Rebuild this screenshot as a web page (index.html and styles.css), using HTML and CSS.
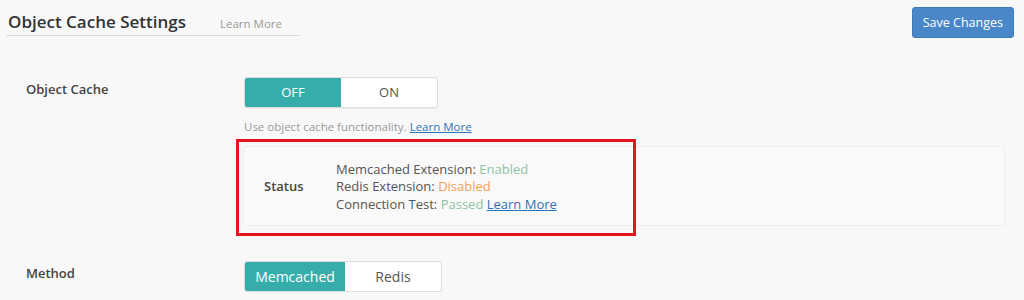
FILE: index.html
```html
<!DOCTYPE html>
<html lang="en">
<head>
	<meta charset="UTF-8">
	<title>Object Cache Settings</title>
<link rel="stylesheet" href="styles.css">
</head>
<body>
	<div class="header">
		<div class="title-wrap">
			<h1>Object Cache Settings</h1>
			<a href="javascript:;" class="title-link">Learn More</a>
		</div>
		<a href="javascript:;" class="btn-save">Save Changes</a>
	</div>

	<div class="settings">
		<div class="row">
			<div class="row-label">Object Cache</div>
			<div class="row-body">
				<div class="toggle">
					<span class="on">OFF</span>
					<span>ON</span>
				</div>
				<p class="help">Use object cache functionality. <a href="javascript:;">Learn More</a></p>
				<div class="status-wrap">
					<div class="status">
						<div class="status-label">Status</div>
						<div class="status-lines">
							<div>Memcached Extension: <span class="ok">Enabled</span></div>
							<div>Redis Extension: <span class="bad">Disabled</span></div>
							<div>Connection Test: <span class="ok">Passed</span> <a href="javascript:;">Learn More</a></div>
						</div>
					</div>
					<div class="mark"></div>
				</div>
			</div>
		</div>

		<div class="row row-method">
			<div class="row-label">Method</div>
			<div class="row-body">
				<div class="toggle toggle-method">
					<span class="on">Memcached</span>
					<span>Redis</span>
				</div>
			</div>
		</div>
	</div>
</body>
</html>
```

FILE: styles.css
```css
* {
	margin: 0;
	padding: 0;
	box-sizing: border-box;
}
body {
	background: #f8f8f8;
	font-family: "Open Sans", "Noto Sans", sans-serif;
	color: #444;
	font-size: 13px;
}
a {
	color: #2e73b8;
}
.header {
	display: flex;
	justify-content: space-between;
	align-items: flex-start;
	padding: 7px 10px 0 6px;
}
.title-wrap {
	width: 294px;
	display: flex;
	align-items: baseline;
	padding: 3px 2px 2px;
	border-bottom: 1px solid #dcdcdc;
}
.title-wrap h1 {
	font-size: 17px;
	font-weight: 600;
	color: #333;
	margin-right: 34px;
}
.title-link {
	font-size: 11.5px;
	color: #999;
	text-decoration: none;
}
.btn-save {
	display: block;
	background: #4a87c8;
	color: #fff;
	text-decoration: none;
	font-size: 12.5px;
	line-height: 29px;
	padding: 0 10px;
	border-radius: 3px;
	border: 1px solid #4079b6;
}
.settings {
	padding: 39px 0 0 26px;
}
.row {
	display: flex;
}
.row-label {
	width: 218px;
	font-weight: 600;
	font-size: 13px;
	color: #444;
	line-height: 25px;
	flex-shrink: 0;
}
.toggle {
	display: inline-flex;
	border: 1px solid #ddd;
	border-radius: 3px;
	background: #fff;
	overflow: hidden;
	box-shadow: 0 1px 1px rgba(0,0,0,0.06);
}
.toggle span {
	width: 96px;
	text-align: center;
	line-height: 29px;
	font-size: 13px;
	color: #555;
}
.toggle .on {
	background: #37adab;
	color: #fff;
}
.toggle-method span {
	font-size: 14px;
}
.toggle-method .on {
	width: 100px;
}
.help {
	font-size: 11.5px;
	color: #999;
	margin-top: 11px;
}
.status-wrap {
	position: relative;
	margin-top: 12px;
	margin-left: -1px;
}
.status {
	width: 762px;
	height: 80px;
	display: flex;
	align-items: center;
	background: #f9f9f9;
	border: 1px dotted #e2e2e2;
	border-radius: 4px;
}
.status-label {
	width: 92px;
	padding-left: 20px;
	font-weight: 600;
	font-size: 13px;
}
.status-lines {
	font-size: 13px;
	line-height: 17.5px;
	color: #555;
	padding-top: 2px;
}
.ok {
	color: #8cc4a4;
}
.bad {
	color: #f5a05a;
}
.mark {
	position: absolute;
	left: -7px;
	top: -7px;
	width: 400px;
	height: 97px;
	border: 3px solid #e5141e;
}
.row-method {
	margin-top: 35px;
}
```
